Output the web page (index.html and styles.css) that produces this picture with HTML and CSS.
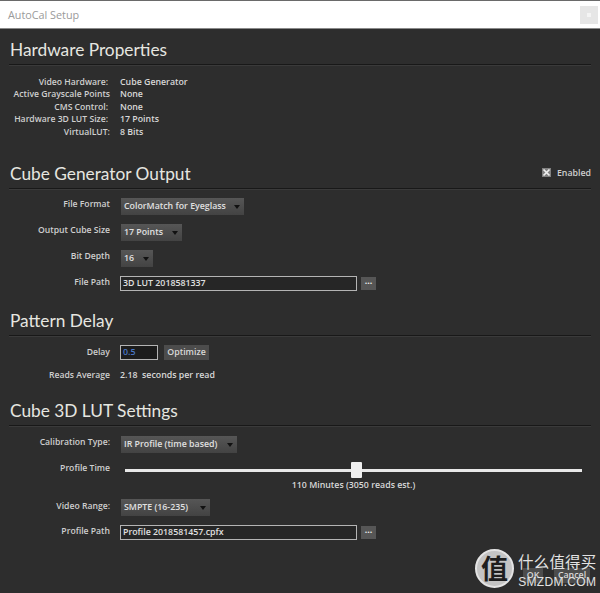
FILE: index.html
```html
<!DOCTYPE html>
<html>
    <head>
        <title>AutoCal Setup</title>
        <link rel="stylesheet" href="styles.css">
    </head>
    <body>
        <div class="titlebar">
            <span class="title">AutoCal Setup</span>
            <span class="closeBtn"><i></i></span>
        </div>

        <div class="content">
            <!-- hardware -->
            <div class="section first">
                <h2>Hardware Properties</h2>
                <div class="info">
                    <label class="inset">Video Hardware:</label><span>Cube Generator</span>
                    <label>Active Grayscale Points</label><span>None</span>
                    <label class="inset">CMS Control:</label><span>None</span>
                    <label class="inset">Hardware 3D LUT Size:</label><span>17 Points</span>
                    <label>VirtualLUT:</label><span>8 Bits</span>
                </div>
            </div>

            <!-- output -->
            <div class="section output">
                <h2>Cube Generator Output</h2>
                <div class="enabled"><span class="check"><svg width="9" height="9" viewBox="0 0 9 9"><path d="M1.5 1.5L7.5 7.5M7.5 1.5L1.5 7.5" stroke="#f0f0f0" stroke-width="1.7"/></svg></span>Enabled</div>
                <div class="form">
                    <label>File Format</label>
                    <div class="select w124">ColorMatch for Eyeglass<b></b></div>
                    <label>Output Cube Size</label>
                    <div class="select w62">17 Points<b></b></div>
                    <label>Bit Depth</label>
                    <div class="select w33">16<b></b></div>
                    <label class="tight">File Path</label>
                    <div class="pathRow"><div class="field">3D LUT 2018581337</div><div class="dots">...</div></div>
                </div>
            </div>

            <!-- delay -->
            <div class="section delay">
                <h2>Pattern Delay</h2>
                <div class="form">
                    <label class="flat">Delay</label>
                    <div class="pathRow"><div class="field small">0.5</div><div class="btn optimize">Optimize</div></div>
                    <label class="flat">Reads Average</label>
                    <span class="value">2.18 &nbsp;seconds per read</span>
                </div>
            </div>

            <!-- lut -->
            <div class="section lut">
                <h2>Cube 3D LUT Settings</h2>
                <div class="form lutForm">
                    <label>Calibration Type:</label>
                    <div class="select w116">IR Profile (time based)<b></b></div>
                    <label class="sliderLabel">Profile Time</label>
                    <div class="slider">
                        <div class="track"><div class="thumb"></div></div>
                        <div class="sliderText">110 Minutes (3050 reads est.)</div>
                    </div>
                    <label class="tight">Video Range:</label>
                    <div class="select w89">SMPTE (16-235)<b></b></div>
                    <label class="tight">Profile Path</label>
                    <div class="pathRow"><div class="field">Profile 2018581457.cpfx</div><div class="dots">...</div></div>
                </div>
            </div>
        </div>

        <div class="footer">
            <div class="btn okBtn">OK</div>
            <div class="btn cancelBtn">Cancel</div>
        </div>

        <!-- watermark over the corner -->
        <div class="mark">
            <div class="markCircle">值</div>
            <div class="markText">
                <div class="markCn">什么值得买</div>
                <div class="markEn">SMZDM.COM</div>
            </div>
        </div>
    </body>
</html>
```

FILE: styles.css
```css
html, body {
    margin: 0;
    height: 593px;
    overflow: hidden;
}

body {
    position: relative;
    background-color: #2d2d2d;
    color: #d8d8d8;
    font-family: "Open Sans", "Noto Sans", sans-serif;
    font-size: 8.8px;
}

.titlebar {
    height: 27px;
    border-top: 1px solid #6a6a6a;
    border-bottom: 1px solid #8a8a8a;
    background-color: #fff;
    display: flex;
    align-items: center;
    justify-content: space-between;
    padding: 0 2px 0 8px;
}

.title {
    color: #9a9a9a;
    font-size: 10.8px;
}

.closeBtn {
    width: 18px;
    height: 18px;
    background-color: #e6e6e6;
    display: flex;
    align-items: center;
    justify-content: center;
}

.closeBtn i {
    width: 4px;
    height: 4px;
    background-color: #f4f4f4;
}

.content {
    padding: 0 9px;
}

.section {
    position: relative;
}

h2 {
    margin: 0;
    height: 25px;
    line-height: 22px;
    padding-left: 1px;
    font-family: Lato, "Open Sans", sans-serif;
    font-size: 17.3px;
    font-weight: 400;
    color: #e6e6e0;
    border-bottom: 1px solid #181818;
    box-shadow: 0 1px 0 #3a3a3a;
}

.first { margin-top: 10px; }
.output { margin-top: 25px; }
.delay { margin-top: 19px; }
.lut { margin-top: 19px; }

.info {
    display: grid;
    grid-template-columns: 101px 1fr;
    column-gap: 10px;
    grid-auto-rows: 12.4px;
    line-height: 12.4px;
    margin-top: 11px;
}

label {
    text-align: right;
    font-size: 8.65px;
    font-weight: 600;
    color: #cfcfcf;
    white-space: nowrap;
}

.inset { padding-right: 2px; }

.info span {
    color: #d8d8d8;
    font-weight: 600;
}

.form {
    display: grid;
    grid-template-columns: 101px 1fr;
    column-gap: 10px;
    row-gap: 9px;
    margin-top: 9px;
    align-items: center;
}

.lutForm { margin-top: 10px; }

.form label { margin-top: -4px; }
.form label.tight { margin-top: -2px; }
.form label.flat { margin-top: 0; }

.select {
    position: relative;
    height: 17px;
    line-height: 17px;
    margin-left: 1px;
    padding-left: 3px;
    box-sizing: border-box;
    background: linear-gradient(#565656, #434343);
    color: #e0e0e0;
    font-weight: 600;
}

.select b {
    position: absolute;
    right: 4px;
    top: 7px;
    border-left: 3.5px solid transparent;
    border-right: 3.5px solid transparent;
    border-top: 4px solid #111;
}

.w124 { width: 123px; }
.w62 { width: 61px; }
.w33 { width: 32px; }
.w116 { width: 116px; }
.w89 { width: 89px; }

.pathRow {
    display: flex;
    align-items: center;
    gap: 4px;
}

.field {
    width: 237px;
    height: 15px;
    line-height: 13px;
    box-sizing: border-box;
    border: 1px solid #b4b4b4;
    padding-left: 2px;
    color: #e0e0e0;
    font-weight: 600;
    background-color: #262626;
}

.field.small {
    width: 38px;
    color: #4a78c8;
    background-color: #1c1c1c;
    margin-right: 2px;
}

.dots {
    width: 15px;
    height: 13px;
    line-height: 9px;
    text-align: center;
    background-color: #565656;
    color: #eee;
    font-weight: 700;
}

.btn {
    background-color: #4c4c4c;
    color: #d8d8d8;
    font-weight: 600;
    height: 15px;
    line-height: 15px;
    text-align: center;
}

.optimize { width: 45px; }

.value {
    font-weight: 600;
    line-height: 12px;
}

.enabled {
    position: absolute;
    right: 0;
    top: 4px;
    display: flex;
    align-items: center;
    gap: 6px;
    font-weight: 600;
    color: #cfcfcf;
}

.check {
    width: 9px;
    height: 9px;
    background-color: #808080;
    display: flex;
}

.slider {
    height: 28px;
    padding: 0 9px 0 5px;
}

.form label.sliderLabel {
    align-self: start;
    margin-top: 0;
}

.track {
    position: relative;
    height: 3px;
    margin-top: 7px;
    background-color: #e8e8e8;
}

.thumb {
    position: absolute;
    left: 226px;
    top: -7px;
    width: 11px;
    height: 16px;
    background-color: #efefef;
    border-radius: 1px;
}

.sliderText {
    margin-top: 7px;
    line-height: 12px;
    text-align: center;
    font-weight: 600;
    color: #d8d8d8;
}

.footer {
    position: absolute;
    left: 523px;
    top: 568px;
    display: flex;
    gap: 11px;
}

.okBtn { width: 20px; }
.cancelBtn { width: 36px; }

.mark {
    position: absolute;
    left: 475px;
    top: 549px;
    display: flex;
    gap: 4px;
    align-items: flex-start;
}

.markCircle {
    width: 39px;
    height: 39px;
    border-radius: 50%;
    box-sizing: border-box;
    border: 2px solid #e4e4e4;
    background-color: #c4c4c4;
    color: #1e1e1e;
    font-family: "Noto Sans CJK SC", sans-serif;
    font-size: 27px;
    line-height: 33px;
    text-align: center;
    font-weight: 700;
}

.markText {
    color: #e2e2e2;
    text-align: center;
}

.markCn {
    font-family: "Noto Sans CJK SC", sans-serif;
    font-size: 15.5px;
    line-height: 20px;
    margin-top: 2px;
    letter-spacing: 0.2px;
    white-space: nowrap;
}

.markEn {
    font-family: "Liberation Sans", sans-serif;
    font-size: 12px;
    line-height: 14px;
    margin-top: 4px;
    letter-spacing: 0.3px;
    white-space: nowrap;
}
```
